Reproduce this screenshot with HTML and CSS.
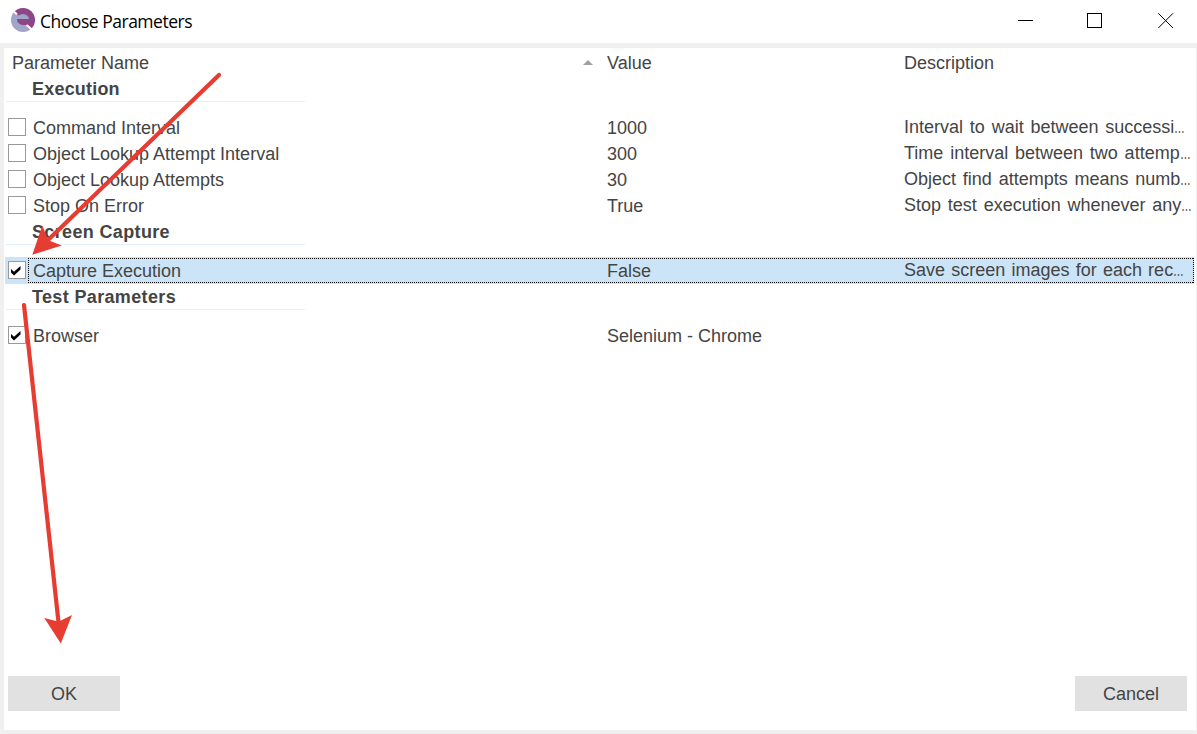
FILE: index.html
```
<!DOCTYPE html>
<html lang="en">
<head>
<meta charset="utf-8">
<title>Choose Parameters</title>
<link rel="stylesheet" href="styles.css">
</head>
<body>
<div class="window">
  <header class="titlebar">
    <svg class="logo" width="24" height="24" viewBox="0 0 24 24">
      <circle cx="12" cy="12" r="12" fill="#a1a5c9"/>
      <path fill="#8d4688" d="M3.500 3.500A12 12 0 0 1 20.500 20.500z"/>
      <path fill="#a1a5c9" d="M6 11.500a6 5.500 0 0 1 12 0z"/>
      <path fill="#8d4688" d="M6 11h13v6h-6.500C8.500 17 6 14.500 6 11z"/>
      <path stroke="#fff" stroke-width="2" d="m1.500 2.500 4.500 3.800M15.500 17l5.700 4.800"/>
    </svg>
    <span class="title">Choose Parameters</span>
    <svg class="controls" width="156" height="16" viewBox="0 0 156 16" fill="none" stroke="#000">
      <path d="M0 7.500h15"/>
      <rect x="69.500" y=".5" width="14" height="14"/>
      <path d="m140.300.3 14.700 14.700m0-14.700-14.700 14.700"/>
    </svg>
  </header>
  <main class="panel">
    <div class="grid">
      <div class="row head">
        <span class="name">Parameter Name</span>
        <svg class="sort" width="10" height="5" viewBox="0 0 10 5"><path fill="#a0a0a0" d="M0 5 5 0l5 5z"/></svg>
        <span class="value">Value</span><span class="desc">Description</span>
      </div>
      <div class="group">Execution</div>
      <div class="row"><i class="box"></i><span class="name">Command Interval</span><span class="value">1000</span><span class="desc">Interval to wait between successi<span class="dots">…</span></span></div>
      <div class="row"><i class="box"></i><span class="name">Object Lookup Attempt Interval</span><span class="value">300</span><span class="desc">Time interval between two attemp<span class="dots">…</span></span></div>
      <div class="row"><i class="box"></i><span class="name">Object Lookup Attempts</span><span class="value">30</span><span class="desc">Object find attempts means numb<span class="dots">…</span></span></div>
      <div class="row"><i class="box"></i><span class="name">Stop On Error</span><span class="value">True</span><span class="desc">Stop test execution whenever any<span class="dots">…</span></span></div>
      <div class="group">Screen Capture</div>
      <div class="row selected"><i class="box"><svg width="16" height="16" viewBox="0 0 16 16"><path fill="#000" d="M2 7v3.500l3 3 6.500-6V4L5 9.800z"/></svg></i><span class="name">Capture Execution</span><span class="value">False</span><span class="desc">Save screen images for each rec<span class="dots">…</span></span>
        <svg class="focus" width="1166" height="25" viewBox="0 0 1166 25"><path d="M0 .5h1166M0 24.500h1166M.5 0v25M1165.500 0v25" fill="none" stroke="#000" stroke-dasharray="1 1" shape-rendering="crispEdges"/></svg>
      </div>
      <div class="group">Test Parameters</div>
      <div class="row"><i class="box"><svg width="16" height="16" viewBox="0 0 16 16"><path fill="#000" d="M2 7v3.500l3 3 6.500-6V4L5 9.800z"/></svg></i><span class="name">Browser</span><span class="value">Selenium - Chrome</span></div>
    </div>
    <footer class="actions">
      <button class="btn">OK</button>
      <button class="btn">Cancel</button>
    </footer>
  </main>
  <svg class="arrows" width="1197" height="734" viewBox="0 0 1197 734" fill="#e63c32" stroke="#e63c32">
    <path d="M219 75 47 241" stroke-width="4.200" stroke-linecap="round"/>
    <path stroke="none" d="m32.300 254.800 10-29.300 5 12.200 3 3.300 11.500 4.600z"/>
    <path d="m24 305 34.600 318" stroke-width="4.200" stroke-linecap="round"/>
    <path stroke="none" d="m60.800 643.500-16.500-25.500 12.400 3.300 3.800-.5L72 615z"/>
  </svg>
</div>
</body>
</html>
```
FILE: styles.css
```
* { box-sizing: border-box; }
body { margin: 0; background: #f0f0f0; }
.window {
  position: relative;
  width: 1197px;
  height: 734px;
  display: flex;
  flex-direction: column;
  padding: 0 1px 4px 4px;
  background: #f0f0f0;
  color: #444;
  font: 18px/26px "Liberation Sans", Arial, sans-serif;
  overflow: hidden;
}
.titlebar {
  display: flex;
  align-items: flex-start;
  height: 43px;
  margin: 0 -1px 5px -4px;
  padding: 8px 23px 0 11px;
  background: #fff;
  color: #000;
}
.title {
  margin-left: 5px;
  font: 17.500px/26px "Open Sans", "Noto Sans", sans-serif;
  letter-spacing: -0.48px;
}
.controls { margin: 5px 0 0 auto; }
.panel {
  flex: 1;
  display: flex;
  flex-direction: column;
  background: #fff;
}
.grid { flex: 1; }
.row {
  position: relative;
  display: grid;
  grid-template-columns: 25px 574px 297px 1fr;
  height: 26px;
  margin: 0 2px 0 0;
  padding-left: 4px;
  white-space: nowrap;
}
.row .name { grid-column: 2; }
.row .value { grid-column: 3; }
.row .desc { grid-column: 4; }
.row:not(.head) .desc { margin-top: -1px; word-spacing: 1.8px; }
.head { height: 28px; line-height: 30px; grid-template-columns: 4px 571px 24px 297px 1fr; }
.head .sort { grid-column: 3; margin-top: 12px; }
.head .value { grid-column: 4; }
.head .desc { grid-column: 5; }
.group {
  width: 299px;
  height: 26px;
  margin: 0 0 13px 2px;
  padding-left: 26px;
  border-bottom: 1px solid #e2f0f9;
  font-weight: bold;
  letter-spacing: 0.35px;
}
.group:first-of-type, .head + .group { letter-spacing: 0.2px; }
.box {
  width: 18px;
  height: 18px;
  margin-top: 3px;
  border: 1px solid #999;
  background: #fff;
}
.box svg { display: block; }
.selected {
  margin-left: 1px;
  padding-left: 3px;
  background: #cce4f7;
  box-shadow: 0 -1px #cce4f7;
}
.row.selected .desc { word-spacing: 1.2px; }
.focus { position: absolute; left: 23px; top: 0; }
.dots { display: inline-block; width: 11px; transform: scaleX(0.6); transform-origin: 0 50%; }
.actions {
  display: flex;
  justify-content: space-between;
  padding: 0 9px 19px 4px;
}
.btn {
  width: 112px;
  height: 35px;
  padding: 0;
  border: 0;
  background: #e1e1e1;
  color: #444;
  font: inherit;
}
.arrows { position: absolute; left: 0; top: 0; pointer-events: none; }
```
